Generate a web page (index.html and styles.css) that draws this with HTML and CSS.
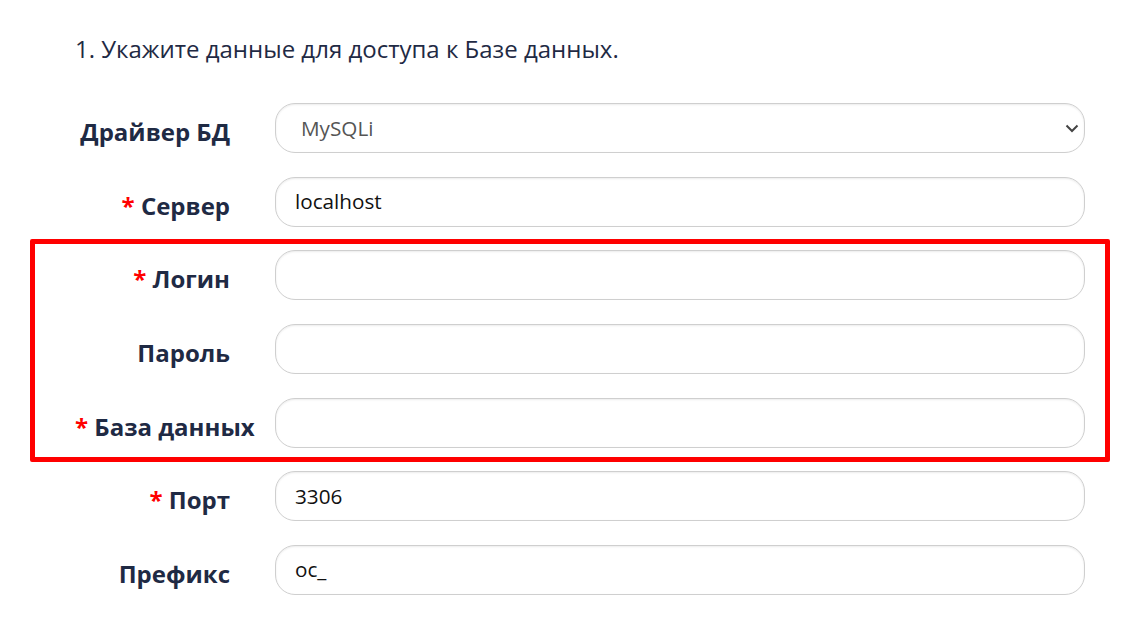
FILE: index.html
```html
<!DOCTYPE html>
<html lang="ru">
<head>
<meta charset="utf-8">
<title>Установка</title>
<link rel="stylesheet" href="styles.css">
</head>
<body>
<div class="page">
  <p class="step">1. Укажите данные для доступа к Базе данных.</p>
  <div class="form">
    <div class="row">
      <label class="label">Драйвер БД</label>
      <div class="control select">
        <span class="value muted">MySQLi</span>
        <svg class="chev" width="14" height="9" viewBox="0 0 14 9"><path d="M1.5 1.5 L7 7 L12.5 1.5" fill="none" stroke="#444" stroke-width="2"/></svg>
      </div>
    </div>
    <div class="row">
      <label class="label"><span class="req">*</span> Сервер</label>
      <div class="control"><span class="value">localhost</span></div>
    </div>
    <div class="group">
      <div class="row">
        <label class="label"><span class="req">*</span> Логин</label>
        <div class="control"></div>
      </div>
      <div class="row">
        <label class="label">Пароль</label>
        <div class="control"></div>
      </div>
      <div class="row">
        <label class="label"><span class="req">*</span> База данных</label>
        <div class="control"></div>
      </div>
    </div>
    <div class="row">
      <label class="label"><span class="req">*</span> Порт</label>
      <div class="control"><span class="value">3306</span></div>
    </div>
    <div class="row">
      <label class="label">Префикс</label>
      <div class="control"><span class="value">oc_</span></div>
    </div>
  </div>
</div>
</body>
</html>
```

FILE: styles.css
```css
html, body {
  margin: 0;
  padding: 0;
  background: #ffffff;
}

body {
  font-family: "Open Sans", "Liberation Sans", sans-serif;
  color: #1f2a44;
}

.page {
  width: 1010px;
  padding: 0 0 0 75px;
}

.step {
  margin: 0;
  padding-top: 32px;
  font-size: 24px;
  line-height: 34px;
  color: #1f2a44;
}

.form {
  display: flex;
  flex-direction: column;
  gap: 23.67px;
  margin-top: 37px;
}

.group {
  position: relative;
  display: flex;
  flex-direction: column;
  gap: 23.67px;
}

.group::after {
  content: "";
  position: absolute;
  top: -11px;
  left: -45px;
  right: -25px;
  bottom: -14px;
  border: 5px solid #ff0000;
  border-radius: 2px;
  pointer-events: none;
}

.row {
  display: grid;
  grid-template-columns: 155px 810px;
  column-gap: 45px;
  align-items: center;
}

.label {
  text-align: right;
  white-space: nowrap;
  font-weight: 700;
  font-size: 24px;
  line-height: 32px;
  padding-top: 8px;
  color: #1f2a44;
}

.req {
  color: #ff0000;
}

.control {
  box-sizing: border-box;
  height: 50px;
  border: 1px solid #cfcfcf;
  border-radius: 20px;
  box-shadow: inset 0 1px 2px rgba(0, 0, 0, 0.08);
  background: #fff;
  display: flex;
  align-items: center;
  padding: 0 20px 0 19px;
}

.value {
  font-size: 20.7px;
  color: #111;
  margin-top: -1px;
}

.muted {
  color: #555;
}

.select {
  justify-content: space-between;
  padding-left: 25px;
  padding-right: 6px;
}

.chev {
  display: block;
  margin-right: -1px;
}
```
